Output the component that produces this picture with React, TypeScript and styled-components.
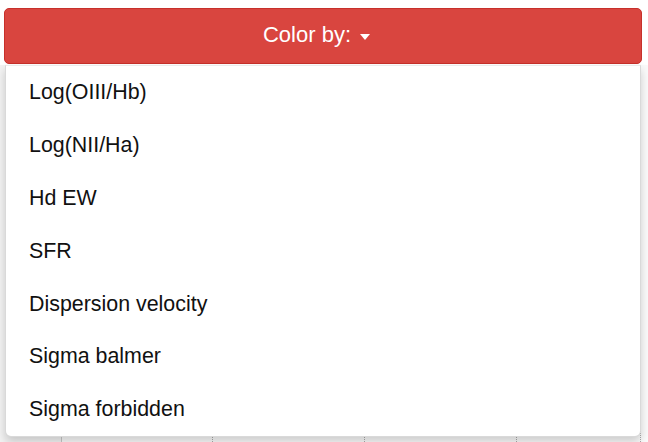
import React from 'react'
import styled, { createGlobalStyle } from 'styled-components'

const GlobalStyle = createGlobalStyle`
    html, body {
        margin: 0;
        padding: 0;
        background: #fff;
        font-family: "Liberation Sans", Arial, Helvetica, sans-serif;
        overflow: hidden;
    }
`;
const Page = styled.div`
    width: 648px;
    height: 442px;
    padding: 8px 6px 0 4px;
    box-sizing: border-box;
    display: flex;
    flex-direction: column;
`;
const Dropdown = styled.div`
    position: relative;
    display: flex;
    flex-direction: column;
    flex: 1;
`;
const Toggle = styled.button`
    height: 56px;
    flex: none;
    width: 100%;
    display: flex;
    align-items: center;
    justify-content: center;
    gap: 9px;
    background: #d9453f;
    border: 1px solid #c7302b;
    border-radius: 5px;
    color: #fff;
    font-family: inherit;
    font-size: 22px;
    padding: 0 13px 2px 0;
    cursor: pointer;
`;
const Caret = styled.span`
    width: 0;
    height: 0;
    margin-top: 3px;
    border-left: 5.5px solid transparent;
    border-right: 5.5px solid transparent;
    border-top: 6px solid #fff;
`;
const Chart = styled.div`
    flex: 1;
    margin-top: 1px;
    display: flex;
    margin-left: -4px;
    margin-right: -6px;
`;
const Axis = styled.div`
    width: 62px;
    border-right: 1px solid #c8c8c8;
    background: #f3f3f3;
    display: flex;
    flex-direction: column;
    align-items: flex-end;
    justify-content: flex-end;
    padding-right: 8px;
    box-sizing: border-box;
`;
const Tick = styled.span`
    font-size: 15px;
    font-weight: bold;
    color: #666;
    margin-bottom: -13px;
`;
const Plot = styled.div`
    flex: 1;
    display: flex;
    background: #fafafa;
`;
const GridCol = styled.div<{ $w: number }>`
    width: ${p => p.$w}px;
    border-right: 1px dotted #aaa;
    box-sizing: border-box;
`;
const Menu = styled.ul`
    position: absolute;
    top: 57px;
    left: 1px;
    right: 1px;
    margin: 0;
    padding: 0;
    list-style: none;
    background: #fff;
    border: 1px solid rgba(0, 0, 0, 0.15);
    border-top-color: rgba(0, 0, 0, 0.08);
    border-radius: 0 0 6px 6px;
    box-shadow: 0 5px 10px rgba(0, 0, 0, 0.18);
    z-index: 2;
`;
const Item = styled.li`
    height: 52.9px;
    display: flex;
    align-items: center;
    padding: 0 23px;
    font-size: 21.4px;
    color: #111;
    cursor: pointer;
`;

const options = [
    'Log(OIII/Hb)',
    'Log(NII/Ha)',
    'Hd EW',
    'SFR',
    'Dispersion velocity',
    'Sigma balmer',
    'Sigma forbidden',
]

const App = () => {
    const [open, setOpen] = React.useState(true)
    return (
        <Page>
            <GlobalStyle />
            <Dropdown>
                <Toggle onClick={() => setOpen(!open)}>
                    Color by: <Caret />
                </Toggle>
                <Chart>
                    <Axis><Tick>200</Tick></Axis>
                    <Plot>
                        <GridCol $w={151} />
                        <GridCol $w={152} />
                        <GridCol $w={152} />
                        <GridCol $w={124} />
                    </Plot>
                </Chart>
                {open &&
                    <Menu>
                        {options.map(o => (
                            <Item key={o}>{o}</Item>
                        ))}
                    </Menu>
                }
            </Dropdown>
        </Page>
    )
}

export default App
